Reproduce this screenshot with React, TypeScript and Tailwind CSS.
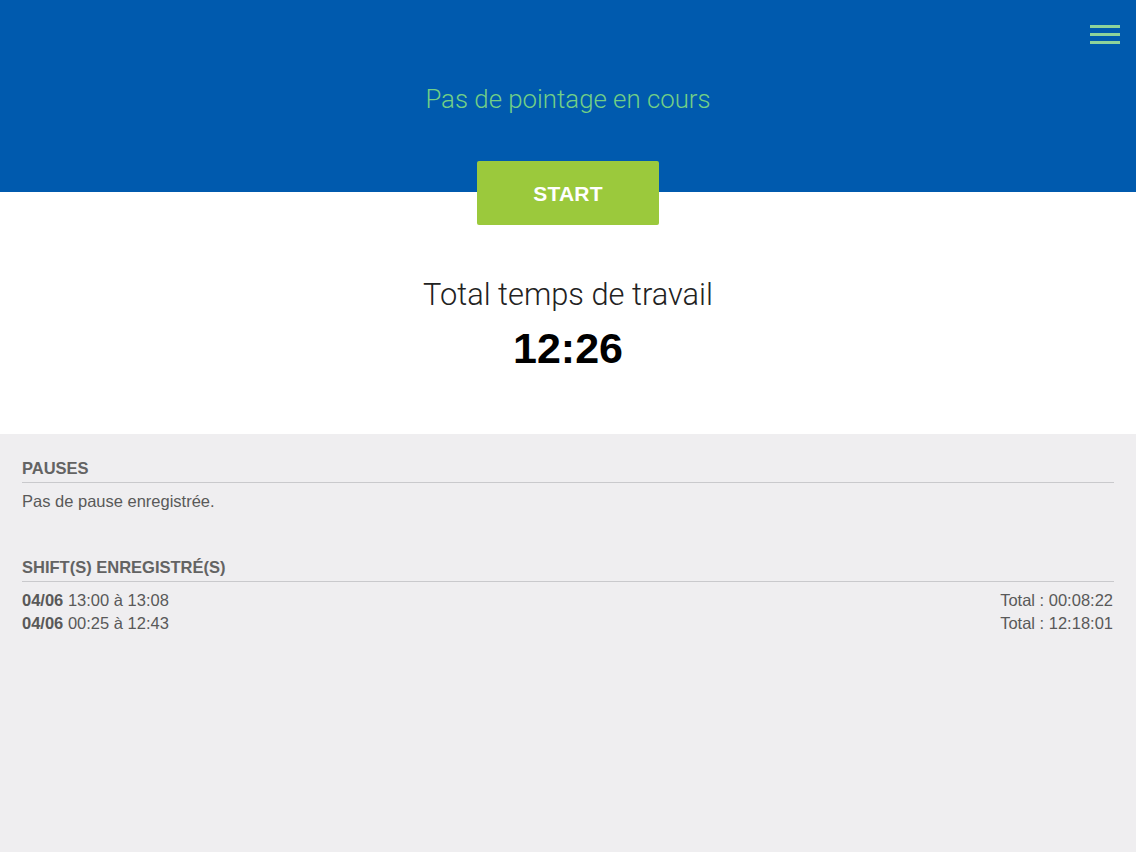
export default function App() {
  const shifts = [
    { date: '04/06', range: '13:00 à 13:08', total: '00:08:22' },
    { date: '04/06', range: '00:25 à 12:43', total: '12:18:01' },
  ];

  return (
    <div className="w-[1136px] h-[852px] flex flex-col bg-[#efeef0] font-['Liberation_Sans',Arial,sans-serif] overflow-hidden">
      {/* Header */}
      <div className="relative h-[192px] shrink-0 bg-[#005aae]">
        <button className="absolute top-[25px] right-[16px] flex flex-col gap-[5px]">
          <span className="block w-[30px] h-[3px] bg-[#8ed39a]" />
          <span className="block w-[30px] h-[3px] bg-[#8ed39a]" />
          <span className="block w-[30px] h-[3px] bg-[#8ed39a]" />
        </button>
        <p className="pt-[83px] text-center text-[25.8px] leading-[32px] font-light text-[#72cf86] font-['Roboto',sans-serif]">
          Pas de pointage en cours
        </p>
      </div>

      {/* Timer */}
      <div className="relative h-[242px] shrink-0 bg-white flex flex-col items-center">
        <button className="-mt-[31px] w-[182px] h-[64px] rounded-[2px] bg-[#9bc93c] text-white text-[21px] font-bold tracking-[0.2px] pt-[2px]">
          START
        </button>
        <p className="mt-[50px] text-[30.8px] leading-[40px] font-light text-[#222] font-['Roboto',sans-serif]">
          Total temps de travail
        </p>
        <p className="mt-[7px] text-[43px] leading-[52px] font-bold text-black">12:26</p>
      </div>

      {/* Lists */}
      <div className="px-[22px] pt-[24px] text-[16.5px] text-[#595959]">
        <h3 className="font-bold text-[#636363] leading-[20px] pb-[4px] border-b border-[#c9c9cc]">PAUSES</h3>
        <p className="mt-[6px] leading-[24px]">Pas de pause enregistrée.</p>

        <h3 className="mt-[44px] font-bold text-[#636363] leading-[20px] pb-[4px] border-b border-[#c9c9cc]">
          SHIFT(S) ENREGISTRÉ(S)
        </h3>
        <div className="mt-[7px] flex flex-col">
          {shifts.map((s, i) => (
            <div key={i} className="flex justify-between leading-[23px] pr-[1px]">
              <span>
                <span className="font-bold">{s.date}</span> {s.range}
              </span>
              <span>Total : {s.total}</span>
            </div>
          ))}
        </div>
      </div>
    </div>
  );
}
